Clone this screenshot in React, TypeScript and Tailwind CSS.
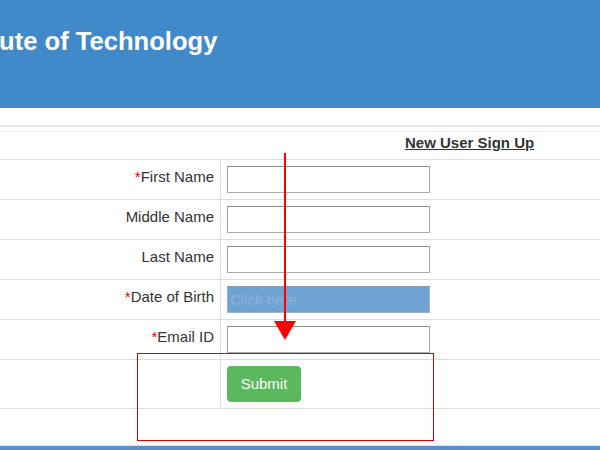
const rows = [
  { label: "First Name", required: true },
  { label: "Middle Name", required: false },
  { label: "Last Name", required: false },
  { label: "Date of Birth", required: true, picker: true },
  { label: "Email ID", required: true },
];

const App = () => {
  return (
    <div className="relative w-[600px] h-[450px] overflow-hidden bg-white font-['Liberation_Sans',Arial,sans-serif] text-[#333]">
      {/* header */}
      <header className="h-[108px] bg-[#418aca] pt-[26px]">
        <h1 className="text-[25.6px] leading-[30px] font-bold text-white whitespace-nowrap -ml-[1px]">
          ute of Technology
        </h1>
      </header>

      <div className="h-[17px]" />
      <div className="border-t-2 border-[#e6e6e6] h-[6px]" />

      {/* sign up form */}
      <div className="border-t border-[#eeeeee] h-[28px] pt-[1px]">
        <a className="block pl-[405px] text-[15px] leading-[20px] font-bold underline text-[#333] whitespace-nowrap">
          New User Sign Up
        </a>
      </div>

      {rows.map((r) => (
        <div key={r.label} className="flex h-[40px] border-t border-[#dddddd]">
          <div className="w-[221px] shrink-0 border-r border-[#dddddd] pr-[6px] pt-[7px] text-right text-[15px] leading-[20px] whitespace-nowrap">
            {r.required && <span className="text-[#ee0000]">*</span>}
            {r.label}
          </div>
          <div className="pl-[6px] pt-[6px]">
            {r.picker ? (
              <input
                readOnly
                placeholder="Click here"
                className="w-[203px] h-[27px] bg-[#6fa3d3] border border-[#9fb4c8] border-t-[#8b9bab] px-[2px] text-[15px] placeholder:text-[#8cb2d8] outline-none"
              />
            ) : (
              <input
                type="text"
                className="w-[203px] h-[27px] bg-white border border-[#aaaaaa] border-t-[#8f8f8f] px-[2px] text-[15px] outline-none"
              />
            )}
          </div>
        </div>
      ))}

      <div className="flex h-[50px] border-t border-b border-[#dddddd]">
        <div className="w-[221px] shrink-0 border-r border-[#dddddd]" />
        <div className="pl-[6px] pt-[6px]">
          <button className="w-[74px] h-[36px] rounded-[4px] bg-[#5cb85c] text-white text-[15px] leading-[20px]">
            Submit
          </button>
        </div>
      </div>

      <div className="h-[36px]" />
      <div className="h-[1px] bg-[#dce7dc]" />
      <div className="h-[4px] bg-[#5b8fc7]" />

      {/* red annotation */}
      <svg className="absolute left-0 top-0 pointer-events-none" width="600" height="450">
        <line x1="285" y1="153" x2="285" y2="326" stroke="#ff0000" strokeWidth="2" />
        <polygon points="274,321 296,321 285,340" fill="#ff0000" />
      </svg>
      <div className="absolute left-[137px] top-[353px] w-[297px] h-[88px] border border-[#e00000]" />
    </div>
  );
};

export default App;
